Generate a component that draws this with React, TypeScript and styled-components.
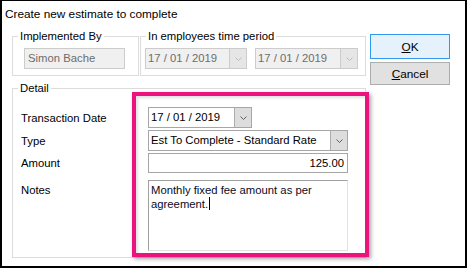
import styled, { createGlobalStyle } from 'styled-components';

const Chevron = ({ disabled }: { disabled?: boolean }) => (
  <svg width='7' height='4' viewBox='0 0 7 4' aria-hidden='true'>
    <polyline
      points='0.5,0.5 3.5,3.5 6.5,0.5'
      fill='none'
      stroke={disabled ? '#bcbcbc' : '#606060'}
      strokeWidth='1'
    />
  </svg>
);

const Combo = ({ value, width, disabled }: { value: string; width: number; disabled?: boolean }) => (
  <ComboBox $width={width} $disabled={disabled}>
    <ComboText>{value}</ComboText>
    <ComboButton $disabled={disabled}>
      <Chevron disabled={disabled} />
    </ComboButton>
  </ComboBox>
);

const App = () => {
  return (
    <>
      <GlobalStyle />
      <Window>
        <Title>Create new estimate to complete</Title>
        <Body>
          <LeftColumn>
            <TopRow>
              <Group $width={127} $height={47}>
                <Legend>Implemented By</Legend>
                <GroupInner>
                  <ReadOnlyBox>Simon Bache</ReadOnlyBox>
                </GroupInner>
              </Group>
              <Group $width={226} $height={47}>
                <Legend>In employees time period</Legend>
                <GroupInner $left={4} $gap={8}>
                  <Combo value='17 / 01 / 2019' width={102} disabled />
                  <Combo value='17 / 01 / 2019' width={103} disabled />
                </GroupInner>
              </Group>
            </TopRow>
            <DetailGroup>
              <Legend>Detail</Legend>
              <Form>
                <Label>Transaction Date</Label>
                <Combo value='17 / 01 / 2019' width={104} />
                <Label>Type</Label>
                <Combo value='Est To Complete - Standard Rate' width={200} />
                <Label>Amount</Label>
                <TextInput>125.00</TextInput>
                <Label $top>Notes</Label>
                <Notes>
                  Monthly fixed fee amount as per
                  <br />
                  agreement.
                  <Caret />
                </Notes>
              </Form>
            </DetailGroup>
          </LeftColumn>
          <ButtonColumn>
            <DialogButton $primary>
              <u>O</u>K
            </DialogButton>
            <DialogButton>
              <u>C</u>ancel
            </DialogButton>
          </ButtonColumn>
        </Body>
        <Highlight />
      </Window>
    </>
  );
};

const GlobalStyle = createGlobalStyle`
  body {
    margin: 0;
    background: #fff;
  }
`;

const Window = styled.div`
  position: relative;
  box-sizing: border-box;
  width: 467px;
  height: 268px;
  border: 2px solid #000;
  border-top-width: 1px;
  background: #fff;
  font-family: 'Liberation Sans', Arial, sans-serif;
  font-size: 11.3px;
  color: #000;
`;

const Title = styled.div`
  box-sizing: border-box;
  height: 28px;
  padding: 5px 0 0 3px;
  font-size: 11.8px;
  line-height: 16px;
`;

const Body = styled.div`
  display: flex;
  gap: 4px;
  padding-left: 10px;
`;

const LeftColumn = styled.div`
  display: flex;
  flex-direction: column;
  gap: 5px;
`;

const TopRow = styled.div`
  display: flex;
  gap: 1px;
`;

const Group = styled.fieldset<{ $width: number; $height: number }>`
  box-sizing: border-box;
  width: ${(p) => p.$width}px;
  height: ${(p) => p.$height}px;
  margin: 0;
  padding: 0;
  border: 1px solid #dcdcdc;
  min-width: 0;
`;

const Legend = styled.legend`
  margin-left: 5px;
  padding: 0 2px;
  line-height: 14px;
`;

const GroupInner = styled.div<{ $left?: number; $gap?: number }>`
  display: flex;
  gap: ${(p) => p.$gap ?? 0}px;
  padding: 5px 0 0 ${(p) => p.$left ?? 11}px;
`;

const ReadOnlyBox = styled.div`
  box-sizing: border-box;
  width: 101px;
  height: 21px;
  padding-left: 3px;
  border: 1px solid #cccccc;
  background: #f0f0f0;
  color: #6d6d6d;
  line-height: 19px;
`;

const ComboBox = styled.div<{ $width: number; $disabled?: boolean }>`
  box-sizing: border-box;
  display: flex;
  width: ${(p) => p.$width}px;
  height: 21px;
  border: 1px solid ${(p) => (p.$disabled ? '#cccccc' : '#a6a6a6')};
  background: ${(p) => (p.$disabled ? '#f0f0f0' : '#fff')};
  color: ${(p) => (p.$disabled ? '#6d6d6d' : '#000')};
`;

const ComboText = styled.div`
  flex: 1;
  padding-left: 2px;
  line-height: 19px;
  white-space: nowrap;
  overflow: hidden;
`;

const ComboButton = styled.div<{ $disabled?: boolean }>`
  box-sizing: border-box;
  display: flex;
  align-items: center;
  justify-content: center;
  width: 17px;
  border-left: 1px solid ${(p) => (p.$disabled ? '#cccccc' : '#adadad')};
  background: ${(p) => (p.$disabled ? '#e6e6e6' : '#dddddd')};
`;

const DetailGroup = styled.fieldset`
  box-sizing: border-box;
  width: 354px;
  height: 177px;
  margin: 0;
  padding: 0;
  border: 1px solid #dcdcdc;
  min-width: 0;
`;

const Form = styled.div`
  display: grid;
  grid-template-columns: 127px 200px;
  grid-template-rows: 21px 21px 20px 71px;
  row-gap: 2px;
  align-items: center;
  padding: 12px 0 0 8px;

  & > :last-child {
    margin-top: 5px;
  }
`;

const Label = styled.div<{ $top?: boolean }>`
  align-self: ${(p) => (p.$top ? 'start' : 'center')};
  padding-top: ${(p) => (p.$top ? 9 : 0)}px;
`;

const TextInput = styled.div`
  box-sizing: border-box;
  height: 20px;
  padding-right: 3px;
  border: 1px solid #a6a6a6;
  text-align: right;
  line-height: 18px;
`;

const Notes = styled.div`
  box-sizing: border-box;
  height: 71px;
  align-self: start;
  padding: 3px 0 0 2px;
  border: 1px solid;
  border-color: #a0a0a0 #e3e3e3 #e3e3e3 #a0a0a0;
  color: #0a0a1e;
  line-height: 13px;
`;

const Caret = styled.span`
  display: inline-block;
  width: 1px;
  height: 13px;
  margin-left: 1px;
  vertical-align: -2px;
  background: #000;
`;

const ButtonColumn = styled.div`
  display: flex;
  flex-direction: column;
  gap: 3px;
  padding-top: 5px;
`;

const DialogButton = styled.button<{ $primary?: boolean }>`
  box-sizing: border-box;
  width: 80px;
  height: ${(p) => (p.$primary ? 25 : 23)}px;
  padding: 0;
  border: 1px solid ${(p) => (p.$primary ? '#3399f0' : '#adadad')};
  background: ${(p) => (p.$primary ? '#e5f1fb' : '#e1e1e1')};
  font-family: inherit;
  font-size: 11.8px;
  color: #000;

  u {
    text-decoration-thickness: 1px;
    text-underline-offset: 1px;
  }
`;

const Highlight = styled.div`
  position: absolute;
  left: 130px;
  top: 91px;
  width: 237px;
  height: 165px;
  box-sizing: border-box;
  border: 4px solid #ec137e;
  box-shadow: 2px 2px 4px rgba(0, 0, 0, 0.35), inset 2px 2px 3px rgba(0, 0, 0, 0.12);
  pointer-events: none;
`;

export default App;
